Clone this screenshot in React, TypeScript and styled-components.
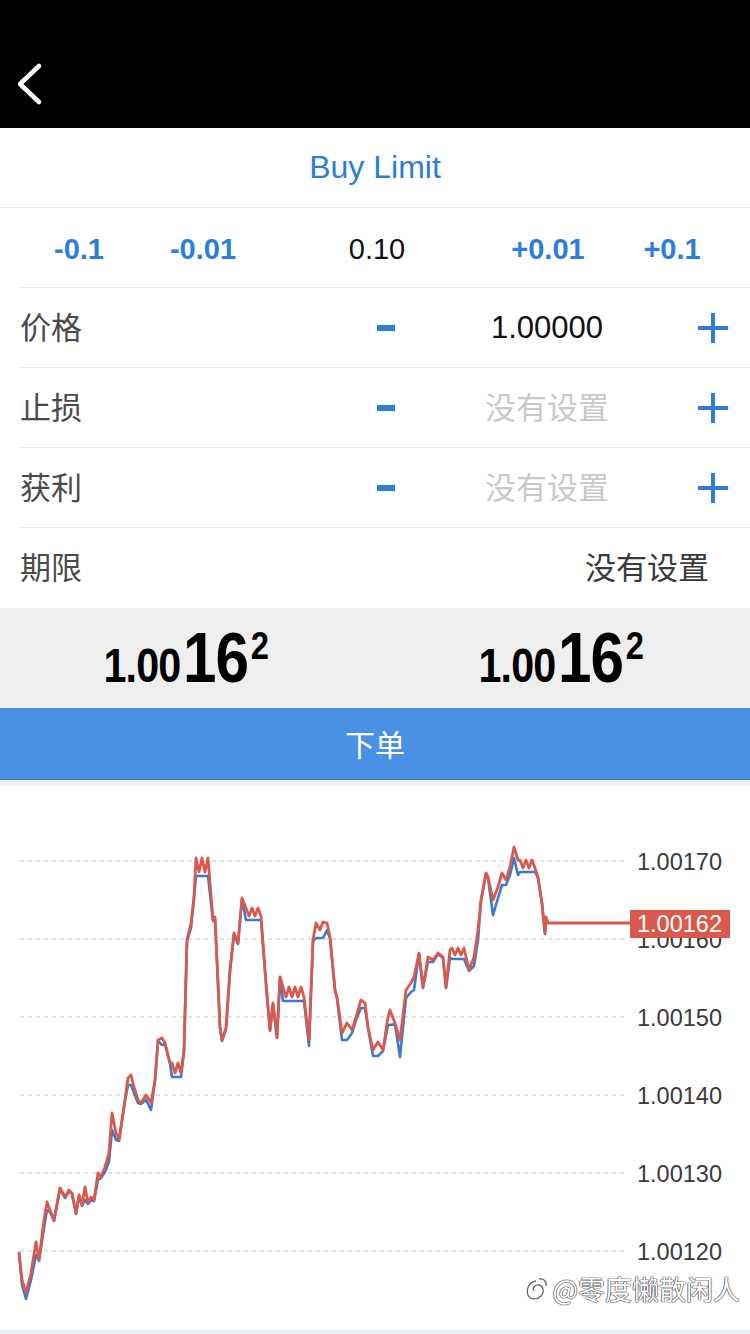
import React from "react";
import styled, { createGlobalStyle } from "styled-components";

const GlobalStyle = createGlobalStyle`
  html, body { margin: 0; padding: 0; background: #fff; }
  body { font-family: "Liberation Sans", Arial, "Noto Sans CJK SC", sans-serif; }
  * { box-sizing: border-box; }
`;

const BLUE = "#2c7fd8";
const CJK = `"Noto Sans CJK SC", "Liberation Sans", sans-serif`;

const Page = styled.div`
  width: 750px;
  height: 1334px;
  overflow: hidden;
  display: flex;
  flex-direction: column;
  background: #fff;
`;

const Header = styled.header`
  height: 128px;
  flex: none;
  background: #000;
  display: flex;
  align-items: center;
  padding: 40px 0 0 14px;
`;

const TitleBar = styled.div`
  height: 80px;
  flex: none;
  display: flex;
  align-items: center;
  justify-content: center;
  border-bottom: 1px solid #e6e6e6;
  color: ${BLUE};
  font-size: 32px;
`;

const VolumeRow = styled.div`
  height: 80px;
  flex: none;
  margin-left: 20px;
  display: grid;
  grid-template-columns: 118px 130px 218px 124px 124px;
  align-items: center;
  border-bottom: 1px solid #e6e6e6;
`;

const VolItem = styled.div<{ $current?: boolean }>`
  text-align: center;
  font-size: 29px;
  font-weight: ${(p) => (p.$current ? 400 : 700)};
  color: ${(p) => (p.$current ? "#111" : BLUE)};
  padding-top: 4px;
`;

const FieldRow = styled.div`
  height: 80px;
  flex: none;
  margin-left: 20px;
  display: grid;
  grid-template-columns: 336px 60px 262px 70px;
  align-items: center;
  border-bottom: 1px solid #e6e6e6;
`;

const ExpiryRow = styled.div`
  height: 80px;
  flex: none;
  margin-left: 20px;
  padding-right: 41px;
  display: flex;
  align-items: center;
  justify-content: space-between;
`;

const Label = styled.span`
  font-family: ${CJK};
  font-size: 31px;
  color: #4a4a4a;
  margin-top: -5px;
`;

const Stepper = styled.div`
  display: flex;
  align-items: center;
  justify-content: center;
`;

const Value = styled.div<{ $placeholder?: boolean }>`
  text-align: center;
  font-family: ${(p) => (p.$placeholder ? CJK : `"Liberation Sans", Arial, sans-serif`)};
  font-size: 31px;
  color: ${(p) => (p.$placeholder ? "#c9c9c9" : "#111")};
  margin-top: ${(p) => (p.$placeholder ? "-5px" : "0")};
`;

const ExpiryValue = styled.span`
  font-family: ${CJK};
  font-size: 31px;
  color: #3a3a3a;
  margin-top: -5px;
`;

const QuoteBar = styled.div`
  height: 100px;
  flex: none;
  background: #efefef;
  display: grid;
  grid-template-columns: 1fr 1fr;
  padding-top: 15px;
`;

const QuoteCell = styled.div`
  display: flex;
  justify-content: center;
  align-items: flex-start;
`;

const Price = styled.div`
  display: inline-flex;
  align-items: baseline;
  line-height: 1;
  font-weight: 700;
  color: #000;
  transform: scaleX(0.86);
  transform-origin: center;
  margin-left: -2px;
`;

const PriceSmall = styled.span`
  font-size: 48px;
  letter-spacing: -1px;
  margin-right: 3px;
`;

const PriceBig = styled.span`
  font-size: 70px;
  letter-spacing: -1px;
  margin-right: 3px;
`;

const PriceSup = styled.span`
  font-size: 38px;
  align-self: flex-start;
  margin-top: 4px;
`;

const OrderButton = styled.div`
  height: 72px;
  flex: none;
  background: #4a91e6;
  border-bottom: 1px solid #3a78c4;
  display: flex;
  align-items: center;
  justify-content: center;
  color: #fff;
  font-family: ${CJK};
  font-size: 30px;
  padding-bottom: 2px;
`;

const Strip = styled.div<{ $h: number }>`
  height: ${(p) => p.$h}px;
  flex: none;
  background: #eef1f3;
`;

const ChartArea = styled.div`
  height: 544px;
  flex: none;
  position: relative;
  background: #fff;
`;

const Watermark = styled.div`
  position: absolute;
  right: 10px;
  bottom: 22px;
  display: flex;
  align-items: center;
  gap: 2px;
  font-family: ${CJK};
  font-size: 27px;
  color: #fff;
  text-shadow: 0 0 1px #444, 0 0 1px #444, 0 0 1px #444, 0 0 1px #444;
`;

type P = [number, number, number?];

const saw = (x0: number, x1: number, yT: number, yB: number, step = 3): P[] => {
  const out: P[] = [];
  let i = 0;
  for (let x = x0; x <= x1; x += step, i++) out.push([x, i % 2 === 0 ? yT : yB, yB + 4]);
  return out;
};

const RED: P[] = [
  [19, 1252], [22, 1280, 1285], [26, 1293, 1299], [31, 1273, 1280], [36, 1242, 1255], [39, 1260],
  [44, 1220, 1228], [47, 1202, 1210], [50, 1210, 1212], [54, 1220], [60, 1188], [65, 1197], [69, 1190],
  [72, 1193], [76, 1213], [79, 1195], [82, 1205], [85, 1187, 1200], [88, 1203], [91, 1197, 1200],
  [94, 1200], [98, 1173, 1180], [101, 1177], [105, 1167, 1172], [109, 1153, 1162], [112, 1113, 1130],
  [116, 1133, 1140], [119, 1140], [122, 1120], [125, 1100], [128, 1078, 1085], [131, 1075, 1085],
  [134, 1087, 1093], [138, 1100, 1103], [141, 1103], [146, 1095, 1100], [151, 1103, 1110], [155, 1080],
  [158, 1040], [162, 1038, 1045], [165, 1043], [170, 1063],
  ...saw(172, 182, 1063, 1073),
  [184, 1050], [187, 940], [191, 923, 928], [194, 897],
  ...saw(196, 208, 858, 872),
  [213, 920], [215, 917], [220, 1027], [222, 1040], [226, 1028], [230, 970], [234, 933], [238, 943],
  [242, 898],
  ...saw(246, 262, 908, 916),
  [266, 983], [270, 1030], [273, 1003], [277, 1037], [280, 977],
  ...saw(283, 306, 987, 997),
  [309, 1040, 1046], [313, 940], [316, 923, 938], [320, 930, 938], [323, 922, 938], [327, 923, 930],
  [330, 937], [335, 990], [337, 997], [342, 1033, 1040], [347, 1023, 1040], [352, 1030, 1033],
  [356, 1017, 1020], [361, 1000, 1008], [365, 1003, 1008], [368, 1027], [373, 1050, 1056], [378, 1042, 1056],
  [383, 1050], [388, 1017, 1025], [390, 1010, 1025], [395, 1023], [400, 1040, 1057], [406, 990, 998],
  [411, 983, 992], [414, 977, 990], [419, 953], [423, 987], [428, 957, 962], [433, 960, 962], [438, 953],
  [443, 957], [446, 987], [450, 950, 958],
  ...saw(452, 466, 948, 955),
  [469, 970], [474, 957, 966], [478, 930, 940], [481, 900], [486, 873], [488, 877], [493, 900, 915],
  [498, 887, 898], [502, 873, 885], [506, 880, 885], [510, 867, 875], [514, 847, 858], [518, 860, 875],
  ...saw(520, 536, 860, 868),
  [538, 877], [542, 903], [545, 933], [546, 917], [548, 923], [630, 923],
];

const BLUE_PTS: P[] = RED.slice(0, -1).map((p) => [p[0], p[2] ?? p[1] + 1]);

const toPath = (pts: P[]) => pts.map((p, i) => `${i ? "L" : "M"}${p[0]} ${p[1]}`).join(" ");

const GRID = [
  { y: 861, label: "1.00170" },
  { y: 939, label: "1.00160" },
  { y: 1017, label: "1.00150" },
  { y: 1095, label: "1.00140" },
  { y: 1173, label: "1.00130" },
  { y: 1251, label: "1.00120" },
];

const Chart = () => (
  <svg width="750" height="544" viewBox="0 786 750 544" style={{ display: "block" }}>
    {GRID.map((g) => (
      <g key={g.label}>
        <line x1="20" x2="625" y1={g.y} y2={g.y} stroke="#c4c4c4" strokeWidth="1" strokeDasharray="4 4" />
        <text x="637" y={g.y + 8.5} fontSize="23.5" fill="#3a3a3a" fontFamily="Liberation Sans, Arial, sans-serif">
          {g.label}
        </text>
      </g>
    ))}
    <path d={toPath(BLUE_PTS)} fill="none" stroke="#3b79d3" strokeWidth="2.6" strokeLinejoin="round" />
    <path d={toPath(RED)} fill="none" stroke="#d95a4d" strokeWidth="2.8" strokeLinejoin="round" />
    <rect x="630" y="910" width="100" height="28" fill="#d95a4c" />
    <text x="637" y="932" fontSize="23.5" fill="#fff" fontFamily="Liberation Sans, Arial, sans-serif">
      1.00162
    </text>
  </svg>
);

const BackIcon = () => (
  <svg width="32" height="44" viewBox="0 0 32 44">
    <path d="M25 4 L6 22 L25 40" fill="none" stroke="#fff" strokeWidth="4.5" strokeLinecap="round" strokeLinejoin="round" />
  </svg>
);

const MinusIcon = () => (
  <svg width="18" height="6" viewBox="0 0 18 6">
    <rect x="0" y="0" width="18" height="6" fill={BLUE} />
  </svg>
);

const PlusIcon = () => (
  <svg width="30" height="30" viewBox="0 0 30 30">
    <rect x="13" y="0" width="4" height="30" fill={BLUE} />
    <rect x="0" y="13" width="30" height="4" fill={BLUE} />
  </svg>
);

const WeiboMark = () => (
  <svg width="26" height="28" viewBox="0 0 26 28">
    <path d="M12 6 C5 7 2 14 4 20 C6 25 13 25 17 21 C21 17 19 11 15 10 C11 9 8 13 10 16" fill="none" stroke="#666" strokeWidth="1.3" />
    <path d="M15 4 C19 3 23 6 22 11" fill="none" stroke="#666" strokeWidth="1.3" />
  </svg>
);

const fields = [
  { label: "价格", value: "1.00000", placeholder: false },
  { label: "止损", value: "没有设置", placeholder: true },
  { label: "获利", value: "没有设置", placeholder: true },
];

const QuotePrice = () => (
  <Price>
    <PriceSmall>1.00</PriceSmall>
    <PriceBig>16</PriceBig>
    <PriceSup>2</PriceSup>
  </Price>
);

export default function App() {
  return (
    <Page>
      <GlobalStyle />
      <Header>
        <BackIcon />
      </Header>
      <TitleBar>Buy Limit</TitleBar>
      <VolumeRow>
        <VolItem>-0.1</VolItem>
        <VolItem>-0.01</VolItem>
        <VolItem $current>0.10</VolItem>
        <VolItem>+0.01</VolItem>
        <VolItem>+0.1</VolItem>
      </VolumeRow>
      {fields.map((f) => (
        <FieldRow key={f.label}>
          <Label>{f.label}</Label>
          <Stepper>
            <MinusIcon />
          </Stepper>
          <Value $placeholder={f.placeholder}>{f.value}</Value>
          <Stepper>
            <PlusIcon />
          </Stepper>
        </FieldRow>
      ))}
      <ExpiryRow>
        <Label>期限</Label>
        <ExpiryValue>没有设置</ExpiryValue>
      </ExpiryRow>
      <QuoteBar>
        <QuoteCell>
          <QuotePrice />
        </QuoteCell>
        <QuoteCell>
          <QuotePrice />
        </QuoteCell>
      </QuoteBar>
      <OrderButton>下单</OrderButton>
      <Strip $h={6} />
      <ChartArea>
        <Chart />
        <Watermark>
          <WeiboMark />
          <span>@零度懒散闲人</span>
        </Watermark>
      </ChartArea>
      <Strip $h={4} />
    </Page>
  );
}
